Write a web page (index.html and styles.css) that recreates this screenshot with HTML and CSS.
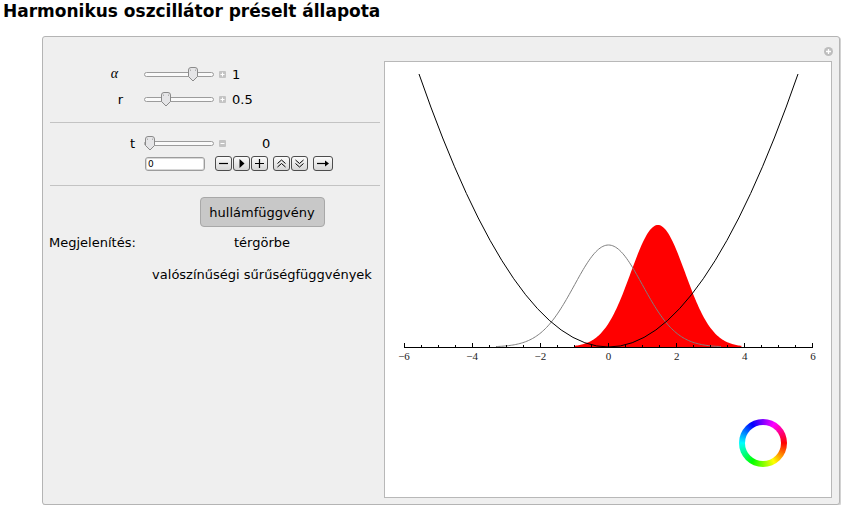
FILE: index.html
```html
<!DOCTYPE html>
<html>
<head>
<meta charset="utf-8">
<title>Harmonikus oszcillátor préselt állapota</title>
<link rel="stylesheet" href="styles.css">
</head>
<body>
<h1 class="title">Harmonikus oszcillátor préselt állapota</h1>
<div class="panel">
  <svg class="panel-icon" width="9" height="9" viewBox="0 0 9 9"><circle cx="4.5" cy="4.5" r="4.5" fill="#bdbdbd"/><path d="M4.5 2v5M2 4.5h5" stroke="#fff" stroke-width="1.3"/></svg>
  <div class="controls">
    <div class="row row-a">
      <span class="lbl lbl-greek">α</span>
      <div class="slider"><div class="track"></div><svg class="thumb" style="left:43px" width="12" height="15" viewBox="0 0 12 15"><path d="M1.5,3 Q1.5,0.5 4,0.5 H8 Q10.5,0.5 10.5,3 V9.5 L6,14 L1.5,9.5 Z" fill="#e5e5e7" stroke="#8a8a8a"/><path d="M3.5,2.5v1.5M8.5,2.5v1.5" stroke="#b0b0b0"/></svg></div>
      <span class="pm"><svg width="7" height="7" viewBox="0 0 7 7"><path d="M3.5 1.5v4M1.5 3.5h4" stroke="#fff" stroke-width="1"/></svg></span>
      <span class="val">1</span>
    </div>
    <div class="row row-r">
      <span class="lbl">r</span>
      <div class="slider"><div class="track"></div><svg class="thumb" style="left:16px" width="12" height="15" viewBox="0 0 12 15"><path d="M1.5,3 Q1.5,0.5 4,0.5 H8 Q10.5,0.5 10.5,3 V9.5 L6,14 L1.5,9.5 Z" fill="#e5e5e7" stroke="#8a8a8a"/><path d="M3.5,2.5v1.5M8.5,2.5v1.5" stroke="#b0b0b0"/></svg></div>
      <span class="pm"><svg width="7" height="7" viewBox="0 0 7 7"><path d="M3.5 1.5v4M1.5 3.5h4" stroke="#fff" stroke-width="1"/></svg></span>
      <span class="val">0.5</span>
    </div>
    <div class="sep"></div>
    <div class="row row-t">
      <span class="lbl">t</span>
      <div class="slider"><div class="track"></div><svg class="thumb" style="left:0px" width="12" height="15" viewBox="0 0 12 15"><path d="M1.5,3 Q1.5,0.5 4,0.5 H8 Q10.5,0.5 10.5,3 V9.5 L6,14 L1.5,9.5 Z" fill="#e5e5e7" stroke="#8a8a8a"/><path d="M3.5,2.5v1.5M8.5,2.5v1.5" stroke="#b0b0b0"/></svg></div>
      <span class="pm pm-t"><svg width="7" height="7" viewBox="0 0 7 7"><path d="M1.5 3.5h4" stroke="#fff" stroke-width="1"/></svg></span>
      <span class="val">0</span>
    </div>
    <div class="row-btns">
      <span class="input">0</span>
      <div class="btn-group">
        <span class="btn"><svg width="11" height="11" viewBox="0 0 11 11"><path d="M1 5.5H10" stroke="#000" stroke-width="1.2"/></svg></span>
        <span class="btn"><svg width="11" height="11" viewBox="0 0 11 11"><polygon points="3.5,1 3.5,10 8.5,5.5" fill="#000"/></svg></span>
        <span class="btn"><svg width="11" height="11" viewBox="0 0 11 11"><path d="M1 5.5H10M5.5 1V10" stroke="#000" stroke-width="1.2"/></svg></span>
      </div>
      <div class="btn-group">
        <span class="btn"><svg width="11" height="11" viewBox="0 0 11 11"><path d="M1.5 5.5L5.5 2L9.5 5.5M1.5 9L5.5 5.5L9.5 9" fill="none" stroke="#000" stroke-width="1"/></svg></span>
        <span class="btn"><svg width="11" height="11" viewBox="0 0 11 11"><path d="M1.5 2L5.5 5.5L9.5 2M1.5 5.5L5.5 9L9.5 5.5" fill="none" stroke="#000" stroke-width="1"/></svg></span>
      </div>
      <div class="btn-group">
        <span class="btn btn-wide"><svg width="14" height="11" viewBox="0 0 14 11"><path d="M1 5.5H10" stroke="#000" stroke-width="1.2"/><polygon points="9,2.5 13,5.5 9,8.5" fill="#000"/></svg></span>
      </div>
    </div>
    <div class="sep sep2"></div>
    <div class="setter">
      <span class="setbtn">hullámfüggvény</span>
      <span class="setlbl">Megjelenítés:</span>
      <span class="opt opt1">térgörbe</span>
      <span class="opt opt2">valószínűségi sűrűségfüggvények</span>
    </div>
  </div>
  <div class="plot">
    <svg class="plot-svg" width="446" height="435" viewBox="385 62 446 435">
      <path id="red" fill="#ff0000" d=""/>
      <path id="gray" fill="none" stroke="#7f7f7f" stroke-width="1" d=""/>
      <path d="M419,74 Q608.5,620 798,74" fill="none" stroke="#000" stroke-width="1"/>
      <path class="axis" d="M404,347.5H813" stroke="#000" stroke-width="1"/>
      <path class="axis" stroke="#000" stroke-width="1" d="M404.5,343V348 M472.5,343V347 M540.5,343V347 M608.5,343V347 M676.5,343V347 M744.5,343V347 M812.5,343V348 M421.5,345V347 M438.5,345V347 M455.5,345V347 M489.5,345V347 M506.5,345V347 M523.5,345V347 M557.5,345V347 M574.5,345V347 M591.5,345V347 M625.5,345V347 M642.5,345V347 M659.5,345V347 M693.5,345V347 M710.5,345V347 M727.5,345V347 M761.5,345V347 M778.5,345V347 M795.5,345V347"/>
      <g class="ticklbl">
        <text x="404" y="360">−6</text>
        <text x="472.2" y="360">−4</text>
        <text x="540.3" y="360">−2</text>
        <text x="608.5" y="360">0</text>
        <text x="676.7" y="360">2</text>
        <text x="744.8" y="360">4</text>
        <text x="813" y="360">6</text>
      </g>
    </svg>
    <div class="wheel"></div>
  </div>
</div>
<script src="script.js"></script>
</body>
</html>
```
FILE: styles.css
```css
* { box-sizing: border-box; }
body {
  margin: 0;
  background: #fff;
  font-family: "DejaVu Sans", "Noto Sans", sans-serif;
  font-size: 13px;
  color: #000;
}
.title {
  margin: 0;
  padding: 1px 0 0 3px;
  height: 21px;
  font-size: 17px;
  font-weight: bold;
  line-height: 20px;
}
.panel {
  position: relative;
  display: flex;
  margin: 15px 0 0 42px;
  width: 798px;
  height: 469px;
  padding: 24px 7px 6px 0;
  background: #efefef;
  border: 1px solid #b4b4b4;
  border-radius: 3px;
  box-shadow: 1px 1px 0 #d2d2d2;
}
.panel-icon {
  position: absolute;
  top: 10px;
  right: 6px;
}
.controls {
  flex: none;
  width: 341px;
}
.row {
  display: flex;
  align-items: center;
  height: 24px;
}
.row-a { margin-top: 1px; }
.row-r { margin-top: 1px; }
.lbl { flex: none; text-align: right; }
.row-a .lbl, .row-r .lbl { width: 80px; margin-right: 21px; }
.lbl-greek {
  font-family: "Liberation Serif", "DejaVu Serif", serif;
  font-style: italic;
  font-size: 14px;
  padding-right: 5px;
}
.row-t .lbl { width: 92px; margin-right: 9px; }
.slider {
  position: relative;
  flex: none;
  width: 70px;
  height: 15px;
}
.track {
  margin-top: 5px;
  height: 5px;
  border: 1px solid #9c9c9c;
  border-radius: 3px;
  background: #fafafa;
}
.thumb { position: absolute; top: 0; }
.pm {
  flex: none;
  display: flex;
  width: 7px;
  height: 7px;
  margin: 0 6px 0 5px;
  background: #c4c4c4;
  border-radius: 1px;
}
.pm-t { margin-right: 36px; }
.val { flex: none; }
.sep {
  height: 1px;
  margin: 11px 4px 0 7px;
  background: #c3c3c3;
}
.sep2 { margin-top: 14px; }
.row-t { margin-top: 8px; }
.row-btns {
  display: flex;
  align-items: center;
  height: 15px;
  margin-top: 1px;
  padding-left: 102px;
}
.input {
  flex: none;
  width: 60px;
  height: 14px;
  margin-right: 10px;
  padding-left: 2px;
  background: #fff;
  border: 1px solid #9c9c9c;
  border-radius: 3px;
  box-shadow: inset 0 0 0 1px #d8d8d8;
  font-size: 9px;
  line-height: 12px;
}
.btn-group {
  display: flex;
  gap: 1px;
  margin-right: 5px;
}
.btn {
  display: flex;
  align-items: center;
  justify-content: center;
  width: 17px;
  height: 15px;
  background: linear-gradient(#fbfbfb, #d6d6d6);
  border: 1px solid #4d4d4d;
  border-radius: 3px;
}
.btn-wide { width: 20px; }
.setter {
  display: grid;
  grid-template-columns: 107px 224px;
  grid-template-rows: 30px 30px 34px;
  align-items: center;
  margin-top: 11px;
}
.setbtn {
  grid-column: 2;
  grid-row: 1;
  justify-self: center;
  display: flex;
  align-items: center;
  justify-content: center;
  width: 125px;
  height: 30px;
  background: #c8c8c8;
  border: 1px solid #a8a8a8;
  border-radius: 4px;
}
.setlbl {
  grid-column: 1;
  grid-row: 2;
  padding-left: 6px;
}
.opt { grid-column: 2; justify-self: center; }
.opt1 { grid-row: 2; }
.opt2 { grid-row: 3; }
.plot {
  position: relative;
  flex: none;
  width: 448px;
  height: 437px;
  background: #fff;
  border: 1px solid #b8b8b8;
}
.plot-svg { display: block; }
.axis { shape-rendering: crispEdges; }
.ticklbl text {
  font-family: "Liberation Serif", "DejaVu Serif", serif;
  font-size: 11px;
  fill: #222;
  text-anchor: middle;
}
.wheel {
  position: absolute;
  left: 354px;
  top: 357px;
  width: 48px;
  height: 48px;
  border-radius: 50%;
  background: conic-gradient(#8000ff, #ff00ff 30deg, #ff0000 90deg, #ffff00 150deg, #00ff00 210deg, #00ffff 270deg, #0000ff 330deg, #8000ff 360deg);
}
.wheel::after {
  content: "";
  position: absolute;
  inset: 6px;
  border-radius: 50%;
  background: #fff;
}
```
FILE: script.js
```js
(function () {
  var X0 = 608.5, S = 34.0833, Y0 = 347;
  function px(u) { return X0 + S * u; }
  function pts(f, a, b, n) {
    var s = [];
    for (var i = 0; i <= n; i++) {
      var u = a + (b - a) * i / n;
      s.push(px(u).toFixed(2) + ',' + (Y0 - f(u)).toFixed(2));
    }
    return s;
  }
  var gray = pts(function (u) { return 102 * Math.exp(-u * u / 2); }, -3.3, 3.3, 160);
  document.getElementById('gray').setAttribute('d', 'M' + gray.join(' L'));
  var red = pts(function (u) { var d = u - 1.45; return 122 * Math.exp(-0.78 * d * d); }, -1, 3.9, 160);
  document.getElementById('red').setAttribute('d',
    'M' + px(-1).toFixed(2) + ',' + Y0 + ' L' + red.join(' L') + ' L' + px(3.9).toFixed(2) + ',' + Y0 + ' Z');
})();
```
